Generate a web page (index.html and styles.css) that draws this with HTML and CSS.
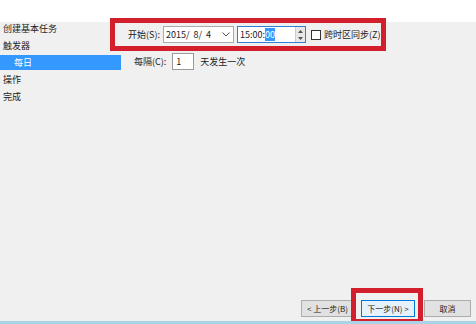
FILE: index.html
```html
<!DOCTYPE html>
<html lang="zh">
<head>
    <meta charset="UTF-8">
    <title>创建基本任务向导</title>
    <link rel="stylesheet" href="styles.css">
</head>
<body>
    <div class="top"></div>
    <div class="wizard">
        <ul class="steps">
            <li>创建基本任务</li>
            <li>触发器</li>
            <li class="sub active">每日</li>
            <li>操作</li>
            <li>完成</li>
        </ul>
        <div class="content">
            <div class="start-row">
                <span class="label">开始(S):</span>
                <div class="combo">
                    <span>2015/&nbsp; 8/&nbsp; 4</span>
                    <svg width="8" height="5" viewBox="0 0 8 5"><path d="M0.5 0.5 L4 4 L7.5 0.5" fill="none" stroke="#555" stroke-width="1"/></svg>
                </div>
                <div class="time">
                    <span>15:00:<b class="sel">00</b></span>
                    <div class="spin">
                        <svg width="7" height="14" viewBox="0 0 7 14"><path d="M3.5 2 L6 5 L1 5 Z M3.5 12 L6 9 L1 9 Z" fill="#555"/></svg>
                    </div>
                </div>
                <span class="check"></span>
                <span class="label">跨时区同步(Z)</span>
            </div>
            <div class="every-row">
                <span class="label">每隔(C):</span>
                <div class="num">1</div>
                <span class="label">天发生一次</span>
            </div>
        </div>
    </div>
    <div class="buttons">
        <button class="btn">&lt; 上一步(B)</button>
        <div class="mark">
            <button class="btn primary">下一步(N) &gt;</button>
        </div>
        <button class="btn cancel">取消</button>
    </div>
    <div class="bottom-line"></div>
</body>
</html>
```

FILE: styles.css
```css
html, body {
    margin: 0;
    height: 100%;
}
body {
    width: 476px;
    height: 324px;
    background-color: #f0f0f0;
    font-family: "Noto Sans CJK SC", "Liberation Sans", sans-serif;
    font-size: 9px;
    color: #222;
    display: flex;
    flex-direction: column;
    overflow: hidden;
}
.top {
    height: 22px;
    background-color: #fff;
    flex-shrink: 0;
}
.wizard {
    flex: 1;
    display: flex;
}
.steps {
    list-style: none;
    margin: 0;
    padding: 0;
    width: 121px;
    margin-top: -2px;
}
.steps li {
    height: 17px;
    line-height: 17px;
    padding-left: 3px;
}
.steps li.sub {
    padding-left: 14px;
}
.steps li.active {
    background-color: #3399ff;
    color: #fff;
    height: 15px;
    line-height: 15px;
    margin: 1px 0;
}
.content {
    flex: 1;
}
.start-row {
    position: relative;
    top: -4px;
    margin-left: -11px;
    width: 253px;
    height: 23px;
    border: 5px solid #d21f2b;
    display: flex;
    align-items: center;
    padding-left: 13px;
    gap: 3px;
}
.combo {
    width: 71px;
    height: 17px;
    box-sizing: border-box;
    background: #fff;
    border: 1px solid #aaa;
    display: flex;
    align-items: center;
    justify-content: space-between;
    padding: 0 3px 0 2px;
    flex-shrink: 0;
}
.time {
    width: 69px;
    height: 17px;
    box-sizing: border-box;
    background: #fff;
    border: 1px solid #2f7fd8;
    display: flex;
    align-items: center;
    justify-content: space-between;
    padding-left: 2px;
    flex-shrink: 0;
}
.sel {
    font-weight: normal;
    background: #3399ff;
    color: #fff;
}
.spin {
    width: 9px;
    height: 15px;
    background: #e8e8e8;
    border-left: 1px solid #ccc;
    display: flex;
    align-items: center;
    justify-content: center;
}
.check {
    width: 8px;
    height: 8px;
    border: 1px solid #333;
    background: #fff;
    margin-left: 2px;
    flex-shrink: 0;
}
.label {
    white-space: nowrap;
}
.every-row {
    display: flex;
    align-items: center;
    gap: 6px;
    margin-top: -2px;
    margin-left: 13px;
}
.num {
    width: 22px;
    height: 17px;
    box-sizing: border-box;
    background: #fff;
    border: 1px solid #999;
    padding-left: 3px;
    line-height: 15px;
}
.buttons {
    display: flex;
    justify-content: flex-end;
    align-items: flex-start;
    padding-right: 5px;
    height: 35px;
    flex-shrink: 0;
}
.btn {
    width: 53px;
    height: 17px;
    margin-top: 14px;
    font-family: inherit;
    font-size: 8px;
    color: #222;
    background: #e1e1e1;
    border: 1px solid #adadad;
    padding: 0;
}
.btn.primary {
    width: 54px;
    margin-top: 7px;
    border-color: #0078d7;
    background: #e5f1fb;
}
.btn.cancel {
    width: 47px;
}
.mark {
    border: 5px solid #d21f2b;
    padding: 0 3px 0 5px;
    height: 36px;
    box-sizing: border-box;
    margin: 2px 1px 0 -3px;
    flex-shrink: 0;
}
.bottom-line {
    position: relative;
    height: 3px;
    background: #a9d3e6;
    flex-shrink: 0;
}
```
